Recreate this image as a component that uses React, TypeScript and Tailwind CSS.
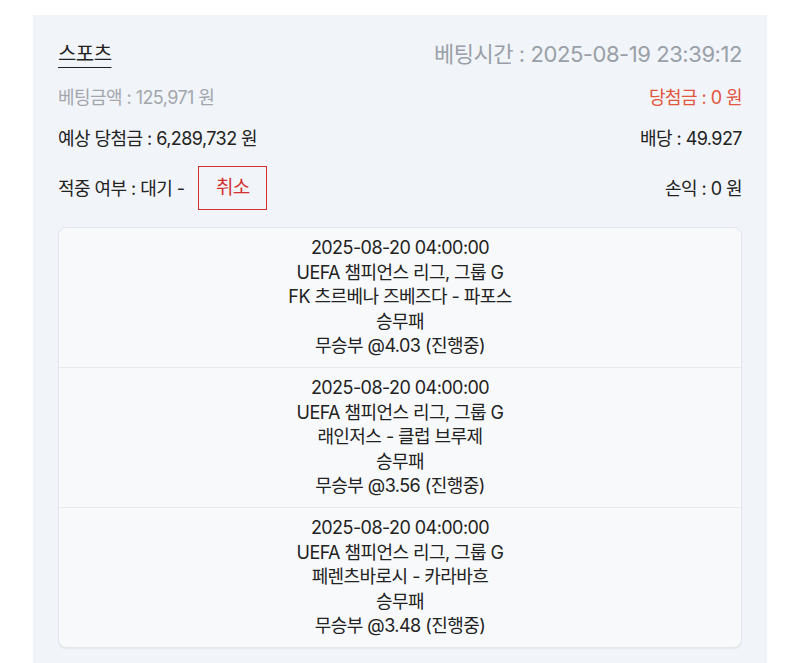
import React from "react";

const rows = [
  { team: "FK 츠르베나 즈베즈다 - 파포스", odd: "4.03" },
  { team: "래인저스 - 클럽 브루제", odd: "3.56" },
  { team: "페렌츠바로시 - 카라바흐", odd: "3.48" },
];

export default function App() {
  return (
    <div
      className="w-[800px] h-[663px] overflow-hidden bg-white tracking-[-0.035em]"
      style={{ fontFamily: "Inter, 'Noto Sans CJK KR', sans-serif" }}
    >
      <div className="mx-[33px] mt-[15px] bg-[#f1f4f8] px-[25px] pt-[24px] pb-[20px] h-[700px]">
        <div className="flex items-center justify-between h-[30px]">
          <span className="text-[20px] text-[#222] underline underline-offset-[6px] decoration-[1px]">스포츠</span>
          <span className="text-[22px] text-[#9aa0a8] tracking-[-0.02em]">베팅시간 : 2025-08-19 23:39:12</span>
        </div>
        <div className="flex items-center justify-between h-[28px] mt-[14px]">
          <span className="text-[18px] text-[#a3a7ad]">베팅금액 : 125,971 원</span>
          <span className="text-[18px] text-[#e2553f]">당첨금 : 0 원</span>
        </div>
        <div className="flex items-center justify-between h-[28px] mt-[13px]">
          <span className="text-[18px] text-[#222]">예상 당첨금 : 6,289,732 원</span>
          <span className="text-[18px] text-[#222]">배당 : 49.927</span>
        </div>
        <div className="flex items-center justify-between h-[44px] mt-[14px]">
          <div className="flex items-center">
            <span className="text-[18px] text-[#222]">적중 여부 : 대기 -</span>
            <span className="ml-[14px] w-[69px] h-[44px] border border-[#d32f2f] flex items-center justify-center text-[19px] text-[#d32f2f]">
              취소
            </span>
          </div>
          <span className="text-[18px] text-[#222]">손익 : 0 원</span>
        </div>
        <div className="mt-[17px] rounded-[8px] border border-[#e3e6ea] bg-[#f8f9fb] shadow-[0_1px_2px_rgba(0,0,0,0.05)]">
          {rows.map((r, i) => (
            <div
              key={i}
              className={`flex flex-col items-center py-[8px] text-[18px] leading-[24.6px] text-[#222] ${
                i > 0 ? "border-t border-[#e6e9ed]" : ""
              }`}
            >
              <span>2025-08-20 04:00:00</span>
              <span>UEFA 챔피언스 리그, 그룹 G</span>
              <span>{r.team}</span>
              <span>승무패</span>
              <span>무승부 @{r.odd} (진행중)</span>
            </div>
          ))}
        </div>
      </div>
    </div>
  );
}
